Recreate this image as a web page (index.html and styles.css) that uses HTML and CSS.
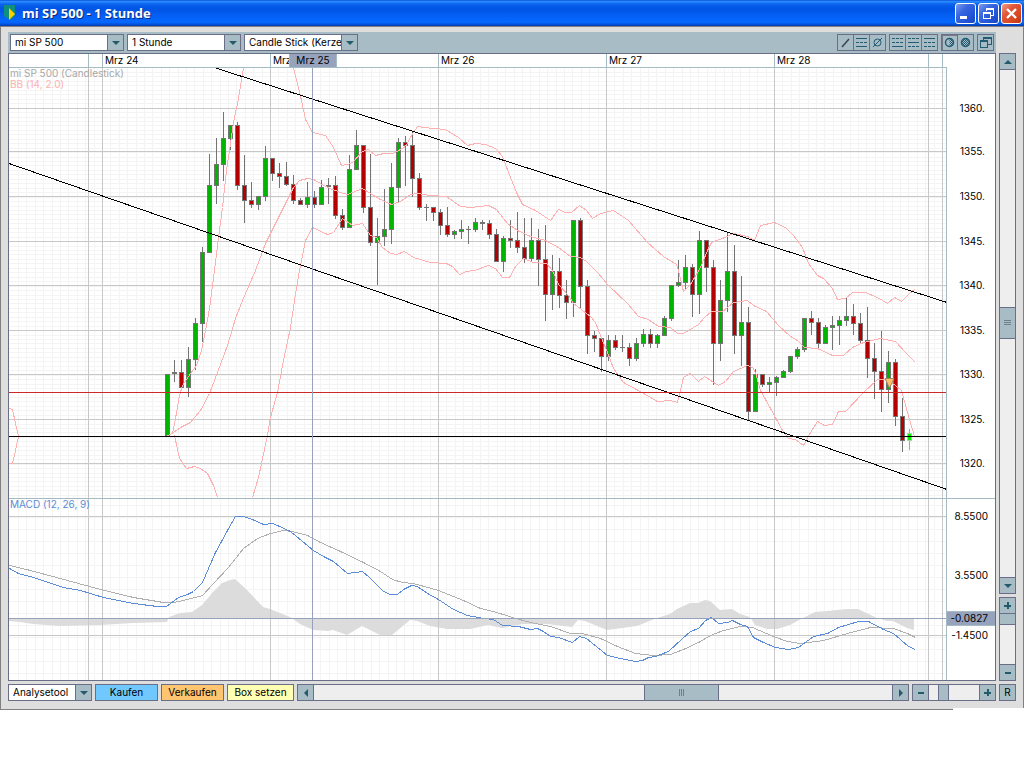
FILE: index.html
```html
<!DOCTYPE html>
<html lang="de">
<head>
    <meta charset="UTF-8">
    <meta name="viewport" content="width=device-width, initial-scale=1.0">
    <title>mi SP 500 - 1 Stunde</title>
    <link rel="stylesheet" href="styles.css">
</head>
<body>
    <div class="window">
        <header class="titlebar">
            <svg class="app-icon" width="12" height="16" viewBox="0 0 12 16">
                <path d="M0 0H11V11L6 15L0 11Z" fill="#0f8f7c"/>
                <path d="M5 3L11 9L5 15Z" fill="#ffd000"/>
            </svg>
            <h1>mi SP 500 - 1 Stunde</h1>
            <div class="window-buttons">
                <button class="win-btn" aria-label="Minimieren">
                    <svg width="19" height="19" viewBox="0 0 19 19"><path d="M4 12H11V15H4Z" fill="#fff"/></svg>
                </button>
                <button class="win-btn" aria-label="Wiederherstellen">
                    <svg width="19" height="19" viewBox="0 0 19 19" fill="none" stroke="#fff" shape-rendering="crispEdges">
                        <path d="M7.5 7V4.5H14.5V11.5H12"/><path d="M7 5H15" stroke-width="2"/>
                        <path d="M4.5 8.5H11.5V14.5H4.5Z"/><path d="M4 9H12" stroke-width="2"/>
                    </svg>
                </button>
                <button class="win-btn win-close" aria-label="Schließen">
                    <svg width="19" height="19" viewBox="0 0 19 19"><path d="M5 5L14 14M14 5L5 14" stroke="#fff" stroke-width="2.4"/></svg>
                </button>
            </div>
        </header>

        <div class="content">
            <div class="workspace">
                <div class="main">
                    <div class="toolbar">
                        <div class="select">
                            <select aria-label="Instrument"><option>mi SP 500</option></select>
                            <span class="select-arrow"><svg width="8" height="4"><path d="M0 0H8L4 4Z"/></svg></span>
                        </div>
                        <div class="select">
                            <select aria-label="Zeitraum"><option>1 Stunde</option></select>
                            <span class="select-arrow"><svg width="8" height="4"><path d="M0 0H8L4 4Z"/></svg></span>
                        </div>
                        <div class="select">
                            <select aria-label="Darstellung"><option>Candle Stick (Kerzen)</option></select>
                            <span class="select-arrow"><svg width="8" height="4"><path d="M0 0H8L4 4Z"/></svg></span>
                        </div>
                        <div class="tools">
                            <div class="tool-group">
                                <button aria-label="Trendlinie"><svg class="tool-icon"><path d="M4 12L11 4" stroke="#35464f" stroke-width="1.5"/></svg></button>
                                <button aria-label="Kanal"><svg class="tool-icon crisp"><path d="M2 3.5H13M2 11.5H13"/><path d="M2 7.5H13" stroke-dasharray="3 1"/></svg></button>
                                <button aria-label="Linien löschen"><svg class="tool-icon"><circle cx="7.5" cy="7.5" r="3.5"/><path d="M3 12L12 3"/></svg></button>
                            </div>
                            <div class="tool-group">
                                <button aria-label="Linie unten"><svg class="tool-icon crisp"><path d="M2 3.5H13M2 7.5H13" stroke-dasharray="3 1"/><path d="M2 11.5H13"/></svg></button>
                                <button aria-label="Linie mitte"><svg class="tool-icon crisp"><path d="M2 3.5H13M2 11.5H13" stroke-dasharray="3 1"/><path d="M2 7.5H13"/></svg></button>
                                <button aria-label="Linie oben"><svg class="tool-icon crisp"><path d="M2 7.5H13M2 11.5H13" stroke-dasharray="3 1"/><path d="M2 3.5H13"/></svg></button>
                            </div>
                            <div class="tool-group">
                                <button class="pressed" aria-label="Raster halb">
                                    <svg class="tool-icon">
                                        <defs><pattern id="checks" width="2" height="2" patternUnits="userSpaceOnUse"><path d="M0 0H1V1H0ZM1 1H2V2H1Z" fill="#235b73" stroke="none"/></pattern></defs>
                                        <circle cx="7.5" cy="7.5" r="4" stroke-width="1.5"/><path d="M7.5 3.5A4 4 0 0 1 7.5 11.5Z" fill="url(#checks)" stroke="none"/>
                                    </svg>
                                </button>
                                <button aria-label="Raster voll"><svg class="tool-icon"><circle cx="7.5" cy="7.5" r="4" fill="url(#checks)" stroke-width="1.5"/></svg></button>
                            </div>
                            <div class="tool-group">
                                <button aria-label="Fenster lösen"><svg class="tool-icon crisp"><path d="M5.5 5V2.5H13.5V9.5H10"/><path d="M2.5 5.5H9.5V12.5H2.5Z"/><path d="M5 3H14M2 6H10" stroke-width="2"/></svg></button>
                            </div>
                        </div>
                    </div>

                    <div class="chart">
                        <div class="plot" id="plot">
                            <svg id="chart" viewBox="9 54 938 626" preserveAspectRatio="none" role="img" aria-label="Kursverlauf mi SP 500"></svg>
                            <div class="legend legend-price">
                                <div>mi SP 500 (Candlestick)</div>
                                <div class="legend-bb">BB (14, 2.0)</div>
                            </div>
                            <div class="legend legend-macd">MACD (12, 26, 9)</div>
                        </div>
                        <div class="axis">
                            <div class="axis-price" id="axisPrice"></div>
                            <div class="axis-macd" id="axisMacd"></div>
                        </div>
                    </div>
                </div>

                <div class="side">
                    <div class="slider vertical scroll">
                        <button aria-label="Nach oben"><svg width="8" height="4"><path d="M0 4H8L4 0Z"/></svg></button>
                        <input type="range" step="any" value="49.8" aria-label="Vertikal scrollen">
                        <button aria-label="Nach unten"><svg width="8" height="4"><path d="M0 0H8L4 4Z"/></svg></button>
                    </div>
                    <div class="slider vertical zoom">
                        <button aria-label="Vertikal vergrößern"><svg width="7" height="7"><path d="M0 3H3V0H5V3H7V5H5V7H3V5H0Z"/></svg></button>
                        <input type="range" value="0" aria-label="Vertikaler Zoom">
                        <button aria-label="Vertikal verkleinern"><svg width="6" height="2"><path d="M0 0H6V2H0Z"/></svg></button>
                    </div>
                </div>
            </div>

            <div class="bottom">
                <div class="select analyse">
                    <select aria-label="Analysetool"><option>Analysetool</option></select>
                    <span class="select-arrow"><svg width="8" height="4"><path d="M0 0H8L4 4Z"/></svg></span>
                </div>
                <button class="btn btn-buy">Kaufen</button>
                <button class="btn btn-sell">Verkaufen</button>
                <button class="btn btn-box">Box setzen</button>
                <div class="slider horizontal scroll">
                    <button aria-label="Nach links"><svg width="4" height="8"><path d="M4 0V8L0 4Z"/></svg></button>
                    <input type="range" step="any" value="65.6" aria-label="Horizontal scrollen">
                    <button aria-label="Nach rechts"><svg width="4" height="8"><path d="M0 0V8L4 4Z"/></svg></button>
                </div>
                <div class="slider horizontal zoom">
                    <button aria-label="Horizontal verkleinern"><svg width="6" height="2"><path d="M0 0H6V2H0Z"/></svg></button>
                    <input type="range" value="23" aria-label="Horizontaler Zoom">
                    <button aria-label="Horizontal vergrößern"><svg width="7" height="7"><path d="M0 3H3V0H5V3H7V5H5V7H3V5H0Z"/></svg></button>
                </div>
                <button class="btn btn-reset">R</button>
            </div>
        </div>
    </div>

    <script src="chart.js"></script>
</body>
</html>
```

FILE: styles.css
```css
* {
    box-sizing: border-box;
}

body {
    margin: 0;
    background: #fff;
    font-family: Inter, "Liberation Sans", Arial, sans-serif;
    font-size: 10px;
    line-height: 13px;
    color: #000;
}

button,
select,
input {
    margin: 0;
    padding: 0;
    border: none;
    border-radius: 0;
    font: inherit;
    color: inherit;
}

.window {
    position: relative;
}

/* cut-off corner of the frame */
.window::after {
    content: "";
    position: absolute;
    right: 0;
    bottom: 0;
    width: 71px;
    height: 2px;
    background: #fff;
}

.titlebar {
    display: flex;
    align-items: center;
    height: 26px;
    padding: 0 2px 0 4px;
    background: linear-gradient(#0a50d8 0%, #2a8cff 6%, #0a62ee 16%, #0054e3 35%, #0560f5 62%, #0468ff 85%, #0050d8 94%, #0038a8 100%);
}

.titlebar h1 {
    flex: 1;
    margin: 0 0 0 6px;
    font-family: "Open Sans", "Noto Sans", sans-serif;
    font-size: 13px;
    line-height: 20px;
    font-weight: 700;
    color: #fff;
    text-shadow: 1px 1px 0 #0a2a80;
}

.window-buttons {
    display: flex;
    gap: 2px;
}

.win-btn {
    display: flex;
    width: 21px;
    height: 21px;
    border: 1px solid #fff;
    border-radius: 3px;
    background: linear-gradient(135deg, #7c9cf0 0%, #3a68e0 35%, #2454d8 70%, #1a48c0 100%);
}

.win-close {
    background: linear-gradient(135deg, #f0a088 0%, #e0583a 35%, #d84820 70%, #b83410 100%);
}

.content {
    display: flex;
    flex-direction: column;
    gap: 3px;
    padding: 5px 7px 8px;
    background: #dedede;
    border: 1px solid #808080;
}

.workspace {
    display: flex;
    gap: 3px;
}

.main {
    flex: 1;
    min-width: 0;
}

.toolbar {
    display: flex;
    gap: 3px;
    padding: 2px;
    background: #a7bcc5;
}

.select {
    position: relative;
    width: 114px;
    height: 17px;
    border: 1px solid #6a6f87;
    background: #fff;
}

.select select {
    display: block;
    appearance: none;
    width: 100%;
    height: 15px;
    padding: 0 16px 0 4px;
    background: #fff;
    line-height: 15px;
}

.select-arrow {
    position: absolute;
    top: 0;
    right: 0;
    display: flex;
    align-items: center;
    justify-content: center;
    width: 16px;
    height: 15px;
    border-left: 1px solid #6a6f87;
    background: #a7bcc5;
    pointer-events: none;
}

.select-arrow svg,
.slider svg {
    fill: #235b6b;
}

.tools {
    display: flex;
    gap: 3px;
    margin-left: auto;
}

.tool-group {
    display: flex;
    border: 1px solid #6a6f87;
}

.tool-group button {
    width: 15px;
    height: 15px;
    background: #a7bcc5;
}

.tool-group button + button {
    width: 16px;
    border-left: 1px solid #6a6f87;
}

.tool-group .pressed {
    box-shadow: inset 1px 1px 0 #77798a;
}

.tool-icon {
    display: block;
    width: 15px;
    height: 15px;
    fill: none;
    stroke: #235b73;
}

.crisp {
    shape-rendering: crispEdges;
}

/* chart */
.chart {
    display: flex;
    height: 628px;
    border: 1px solid #6a6f87;
    background: #fff;
}

.plot {
    position: relative;
    flex: 1;
    min-width: 0;
}

.plot svg {
    display: block;
    width: 100%;
    height: 626px;
}

.plot line,
.plot polyline,
.plot rect {
    shape-rendering: crispEdges;
}

.minor { stroke: #f4f4f4; }
.major { stroke: #c8c8c8; }
.frame { stroke: #a5bbc3; }
.cursor { stroke: #97a3bd; }
.trend { stroke: #000; }
.stop { stroke: #cc2828; }
.histogram { fill: #dcdcdc; }
.wick { stroke: #747474; }
.edge { fill: #747474; }
.up { fill: #00b400; }
.down { fill: #b40000; }
.wick-live { stroke: #a8a8a8; }
.edge-live { fill: #a0d8a0; }
.live { fill: #00f000; }
.marker { fill: #ffc468; stroke: #a08868; }

.bb,
.macd,
.signal {
    fill: none;
}

.bb { stroke: #ffb0b0; }
.macd { stroke: #5c8cd8; }
.signal { stroke: #b0b0b0; }

.legend {
    position: absolute;
    left: 1px;
    line-height: 11px;
    color: #a8a8a8;
}

.legend-price { top: 14px; }
.legend-bb { color: #ffb0b0; }

.legend-macd {
    top: 445px;
    color: #5c8cd8;
}

.date {
    position: absolute;
    top: 0;
    padding-left: 3px;
    white-space: nowrap;
}

.date-active {
    width: 48px;
    height: 14px;
    padding: 0;
    border: 1px solid #a5bbc3;
    border-top: none;
    background: #97a3bd;
    text-align: center;
}

.axis {
    width: 48px;
}

.axis-price,
.axis-macd {
    position: relative;
}

.axis-price {
    height: 445px;
    border-bottom: 1px solid #a5bbc3;
}

.axis-label {
    position: absolute;
    right: 10px;
}

.axis-macd .axis-label {
    right: 7px;
}

.axis-macd .axis-active {
    right: 0;
    width: 48px;
    height: 15px;
    padding-right: 7px;
    border: 1px solid #a5bbc3;
    border-width: 1px 0;
    background: #97a3bd;
    text-align: right;
}

/* scroll bars and zoom sliders */
.side {
    display: flex;
    flex-direction: column;
    gap: 3px;
    width: 17px;
    padding-top: 21px;
}

.slider {
    display: flex;
    border: 1px solid #6a6f87;
    background: #eee;
}

.slider button {
    display: flex;
    flex: none;
    align-items: center;
    justify-content: center;
    background: #a7bcc5;
}

.slider input {
    flex: 1;
    appearance: none;
    min-width: 0;
    min-height: 0;
    background: #eee;
}

.slider input::-webkit-slider-thumb {
    appearance: none;
    border: 0 solid #6a6f87;
    border-radius: 0;
    background: #a7bcc5;
}

.horizontal {
    height: 17px;
}

.horizontal button {
    width: 16px;
    height: 15px;
}

.horizontal button:first-child { border-right: 1px solid #6a6f87; }
.horizontal button:last-child { border-left: 1px solid #6a6f87; }

.horizontal input {
    height: 15px;
}

.horizontal input::-webkit-slider-thumb {
    width: 11px;
    height: 15px;
    border-width: 0 1px;
}

.horizontal.scroll {
    flex: 1;
}

.horizontal.scroll input::-webkit-slider-thumb {
    width: 75px;
    background: repeating-linear-gradient(90deg, #6a8090 0 1px, #a7bcc5 1px 2px) center / 5px 7px no-repeat #a7bcc5;
}

.horizontal.zoom {
    width: 84px;
}

.vertical {
    flex-direction: column;
}

.vertical button {
    width: 15px;
    height: 16px;
}

.vertical button:first-child { border-bottom: 1px solid #6a6f87; }
.vertical button:last-child { border-top: 1px solid #6a6f87; }

.vertical input {
    writing-mode: vertical-lr;
    width: 15px;
}

.vertical input::-webkit-slider-thumb {
    width: 15px;
    height: 11px;
    border-bottom-width: 1px;
}

.vertical.scroll {
    flex: 1;
}

.vertical.scroll input::-webkit-slider-thumb {
    height: 32px;
    border-width: 1px 0;
    background: repeating-linear-gradient(#6a8090 0 1px, #a7bcc5 1px 2px) center / 7px 5px no-repeat #a7bcc5;
}

.vertical.zoom {
    height: 84px;
}

/* bottom bar */
.bottom {
    display: flex;
    gap: 3px;
}

.analyse {
    width: 84px;
}

.btn {
    width: 63px;
    height: 17px;
    border: 1px solid #6a6f87;
    line-height: 15px;
    text-align: center;
}

.btn-buy { background: #70c8ff; }
.btn-sell { background: #ffc470; }

.btn-box {
    width: 67px;
    background: #ffffb4;
}

.btn-reset {
    width: 17px;
    background: #a7bcc5;
}
```

FILE: chart.js
```js
const svg = document.getElementById('chart');
const plot = document.getElementById('plot');

const LEFT = 9, TOP = 54, WIDTH = 938;

// [high, body top, body bottom, low, direction]
const candles = [
    [374, 374, 436, 436, 'u'], [360, 372, 374, 382, 'u'], [360, 372, 388, 390, 'd'], [347, 359, 388, 397, 'u'],
    [318, 323, 360, 370, 'u'], [247, 252, 324, 342, 'u'], [154, 185, 253, 253, 'u'], [138, 164, 186, 204, 'u'],
    [112, 138, 165, 181, 'u'], [125, 125, 139, 150, 'u'], [122, 125, 186, 190, 'd'], [155, 185, 201, 223, 'd'],
    [182, 200, 205, 208, 'd'], [196, 196, 205, 210, 'u'], [146, 158, 197, 201, 'u'], [158, 158, 174, 181, 'd'],
    [163, 173, 177, 188, 'd'], [162, 176, 185, 186, 'd'], [175, 184, 201, 204, 'd'], [198, 200, 205, 205, 'd'],
    [182, 197, 205, 208, 'u'], [191, 197, 205, 208, 'd'], [180, 187, 205, 205, 'u'], [178, 185, 187, 204, 'u'],
    [176, 185, 216, 219, 'd'], [209, 215, 228, 230, 'd'], [155, 169, 228, 228, 'u'], [130, 145, 170, 170, 'u'],
    [145, 145, 208, 213, 'd'], [154, 207, 243, 246, 'd'], [218, 236, 243, 285, 'u'], [189, 229, 237, 246, 'u'],
    [163, 187, 230, 244, 'u'], [138, 142, 188, 202, 'u'], [136, 142, 146, 186, 'd'], [132, 145, 179, 197, 'd'],
    [173, 178, 208, 210, 'd'], [204, 207, 208, 221, 'd'], [207, 207, 213, 221, 'd'], [209, 212, 226, 235, 'd'],
    [207, 225, 235, 237, 'd'], [230, 231, 235, 239, 'u'], [220, 229, 232, 239, 'u'], [226, 229, 230, 244, 'u'],
    [218, 222, 230, 232, 'u'], [220, 222, 224, 230, 'u'], [220, 223, 235, 239, 'd'], [229, 234, 262, 262, 'd'],
    [236, 238, 262, 272, 'u'], [220, 238, 241, 248, 'd'], [212, 240, 248, 253, 'd'], [218, 247, 259, 263, 'd'],
    [218, 240, 259, 262, 'u'], [229, 240, 260, 286, 'd'], [225, 259, 295, 321, 'd'], [255, 271, 295, 310, 'u'],
    [258, 271, 296, 308, 'd'], [280, 295, 303, 319, 'd'], [220, 220, 303, 317, 'u'], [218, 220, 287, 308, 'd'],
    [280, 286, 336, 354, 'd'], [331, 335, 339, 352, 'd'], [338, 338, 357, 372, 'd'], [335, 340, 357, 361, 'u'],
    [335, 340, 348, 350, 'd'], [335, 347, 348, 352, 'u'], [343, 347, 359, 366, 'd'], [338, 343, 359, 361, 'u'],
    [329, 334, 344, 347, 'u'], [329, 334, 344, 348, 'd'], [334, 335, 344, 348, 'u'], [316, 318, 336, 336, 'u'],
    [285, 285, 319, 321, 'u'], [260, 282, 286, 287, 'u'], [255, 267, 283, 290, 'u'], [264, 267, 295, 317, 'd'],
    [231, 240, 295, 314, 'u'], [240, 240, 268, 292, 'd'], [260, 267, 344, 385, 'd'], [280, 300, 344, 361, 'u'],
    [232, 271, 301, 312, 'u'], [245, 271, 336, 354, 'd'], [276, 322, 336, 366, 'u'], [307, 322, 412, 421, 'd'],
    [369, 374, 412, 412, 'u'], [374, 374, 385, 387, 'd'], [377, 382, 385, 392, 'u'], [376, 377, 383, 396, 'u'],
    [370, 371, 378, 378, 'u'], [356, 356, 372, 373, 'u'], [347, 349, 357, 359, 'u'], [318, 318, 350, 352, 'u'],
    [311, 318, 323, 335, 'd'], [318, 322, 344, 348, 'd'], [325, 327, 344, 344, 'u'], [316, 325, 328, 350, 'u'],
    [316, 320, 326, 345, 'u'], [298, 316, 321, 326, 'u'], [304, 316, 324, 335, 'd'], [313, 323, 341, 343, 'd'],
    [307, 340, 359, 378, 'd'], [343, 358, 372, 399, 'd'], [331, 371, 390, 412, 'd'], [351, 362, 390, 403, 'u'],
    [359, 362, 417, 426, 'd'], [398, 416, 441, 452, 'd'], [429, 433, 441, 450, 'live']
];

const bands = [
    '9,408 12,409 15,423 18,436 15,450 12,463 9,463',
    // upper
    '167,435 172,433 175,418 179,395 182,385 190,373 196,365 201,350 205,330 209,308 214,270 218,237 222,207 226,170 230,143 233,122 238,98 243,68',
    '293,68 297,83 301,100 305,119 312,132 325,135 333,147 341,165 347,164 352,162 362,151 368,149 375,155 383,153 393,153 405,146 411,135 417,126 423,127 445,129 458,137 467,145 475,143 485,144 495,148 502,156 508,172 516,192 522,204 535,210 550,220 558,209 565,212 571,212 579,205 586,210 592,218 600,213 613,210 628,220 647,242 663,256 676,264 678,270 683,291 690,284 700,267 707,250 711,242 722,238 733,233 747,236 754,240 760,225 774,222 785,227 793,235 802,247 808,263 817,275 823,278 832,288 837,299 845,298 852,292 865,292 877,297 887,303 894,297 901,301 908,294 915,288',
    // middle
    '173,432 180,427 190,422 200,410 209,393 217,372 227,345 235,318 242,300 255,270 265,243 278,217 293,187 299,180 307,178 313,179 327,187 340,192 347,194 362,188 378,198 391,204 400,201 410,194 417,193 430,195 446,196 460,206 470,207 488,205 496,209 507,223 517,230 530,236 545,240 558,247 570,256 580,257 586,261 597,272 608,285 627,303 638,316 648,319 658,326 670,327 677,333 683,333 698,324 704,317 711,311 722,311 733,302 747,300 753,305 766,311 778,325 790,336 797,340 804,347 817,348 832,355 843,355 852,347 863,342 880,338 895,341 905,352 915,362',
    // lower
    '174,435 179,458 186,468 194,466 200,468 207,473 213,485 217,497',
    '252,497 258,477 267,435 270,417 277,392 283,360 290,327 294,300 299,270 305,240 312,227 327,234 333,232 342,218 352,225 362,223 370,235 376,237 382,247 390,253 396,254 404,251 413,257 430,262 446,263 452,266 459,274 466,271 474,270 488,265 495,268 502,277 509,277 515,266 523,258 533,262 546,263 552,270 558,284 568,295 573,303 590,316 595,322 600,335 607,352 613,368 623,382 636,389 650,397 657,401 670,400 677,402 683,377 690,373 698,381 704,376 718,385 725,381 733,371 747,365 752,367 755,372 760,390 770,408 782,430 788,438 795,439 803,445 810,432 817,421 824,425 832,424 838,411 845,411 863,392 877,379 886,379 895,385 901,390 907,412 914,436'
];

const signal = '9,565 30,570 67,580 100,589 133,597 163,602 173,602 183,600 202,595 213,583 228,567 243,548 257,538 270,533 283,530 292,531 307,535 320,542 340,551 363,562 380,571 392,579 402,582 413,583 438,590 463,600 480,608 493,611 512,617 530,622 550,626 570,633 582,633 600,638 617,646 635,653 653,655 670,654 683,649 700,641 710,635 723,630 740,626 752,627 773,636 787,641 800,643 823,640 847,633 870,627 893,628 907,633 915,637';

const macd = '9,568 18,573 33,577 63,587 80,590 103,597 133,603 157,606 166,606 178,597 187,594 193,591 202,582 208,568 215,552 227,530 235,516 243,516 252,519 263,524 272,523 277,525 290,531 313,550 323,556 333,561 347,573 362,571 369,577 377,585 383,591 390,594 397,594 403,589 411,585 417,586 427,593 438,599 453,609 467,615 483,618 493,619 502,625 518,626 530,629 537,628 543,631 550,636 558,637 572,642 579,636 586,638 607,655 620,658 635,661 642,660 648,657 655,656 668,651 682,638 690,631 698,628 705,620 711,617 718,623 727,622 732,620 740,624 747,626 753,637 763,642 775,647 788,649 798,647 813,636 827,633 838,627 858,621 868,621 883,629 893,633 908,646 915,649';

const histogram = '9,618 9,621 20,622 33,624 60,626 100,625 133,623 167,622 169,617 180,613 192,612 202,605 213,592 222,583 230,580 235,579 247,590 263,607 270,609 290,617 300,624 313,630 328,631 333,630 347,635 362,626 380,635 392,635 410,620 417,621 430,626 447,629 470,629 488,625 502,628 523,624 547,624 572,627 578,620 585,621 607,630 637,626 657,618 670,614 677,609 690,603 698,603 705,600 710,601 720,610 732,609 740,614 750,617 755,625 767,629 777,629 790,625 803,618 815,612 827,611 847,609 858,609 877,618 887,621 893,621 907,628 914,630 914,618';

function draw(name, attrs, className) {
    const el = document.createElementNS('http://www.w3.org/2000/svg', name);
    for (const key in attrs) {
        el.setAttribute(key, attrs[key]);
    }
    el.setAttribute('class', className);
    svg.appendChild(el);
}

function line(x1, y1, x2, y2, className) {
    draw('line', { x1, y1, x2, y2 }, className);
}

function vLine(x, y1, y2, className) {
    line(x + 0.5, y1, x + 0.5, y2, className);
}

function hLine(y, className) {
    line(LEFT, y + 0.5, LEFT + WIDTH, y + 0.5, className);
}

function curve(points, className) {
    // move the points to pixel centres
    const shifted = points.split(' ').map(p => p.split(',').map(n => Number(n) + 0.5).join(',')).join(' ');
    draw('polyline', { points: shifted }, className);
}

// fine grid
for (let x = 18; x < 946; x += 8.4) {
    vLine(Math.round(x), 68, 680, 'minor');
}
for (let i = -8; i < 88; i++) {
    const y = Math.round(107.6 + i * 4.45);
    if (y > 68 && y < 498) hLine(y, 'minor');
}
for (let y = 505; y < 680; y += 12) {
    hLine(y, 'minor');
}

// histogram lies under the main grid
draw('polygon', { points: histogram }, 'histogram');

[88, 102, 270, 438, 606, 774, 928, 942].forEach(x => {
    vLine(x, 54, 67, 'frame');
    vLine(x, 68, 680, 'major');
});
[108, 151, 196, 241, 285, 330, 374, 419, 463, 516, 635].forEach(y => hLine(y, 'major'));

candles.forEach(([high, top, bottom, low, dir], i) => {
    const x = 167 + i * 7;
    const live = dir === 'live';
    vLine(x, high, low, live ? 'wick-live' : 'wick');
    draw('rect', { x: x - 2, y: top, width: 5, height: bottom - top }, live ? 'edge-live' : 'edge');
    if (bottom - top > 2) {
        const className = { u: 'up', d: 'down', live: 'live' }[dir];
        draw('rect', { x: x - 1, y: top + 1, width: 3, height: bottom - top - 2 }, className);
    }
});

bands.forEach(points => curve(points, 'bb'));
line(214, 67.5, 947, 302.5, 'trend');
line(9, 163.5, 947, 489.5, 'trend');
hLine(392, 'stop');
hLine(436, 'trend');
draw('path', { d: 'M885 378.5H894L889.5 388Z' }, 'marker');

curve(signal, 'signal');
curve(macd, 'macd');

hLine(67, 'frame');
hLine(498, 'frame');
hLine(618, 'cursor');
vLine(312, 67, 680, 'cursor');
vLine(946, 67, 680, 'frame');

function addLabel(parent, text, className, prop, value) {
    const el = document.createElement('div');
    el.className = className;
    el.textContent = text;
    el.style[prop] = value;
    parent.appendChild(el);
}

const left = x => (x - LEFT) / WIDTH * 100 + '%';

addLabel(plot, 'Mrz 24', 'date', 'left', left(102));
addLabel(plot, 'Mrz', 'date', 'left', left(270));
addLabel(plot, 'Mrz 25', 'date date-active', 'left', left(289));
addLabel(plot, 'Mrz 26', 'date', 'left', left(438));
addLabel(plot, 'Mrz 27', 'date', 'left', left(606));
addLabel(plot, 'Mrz 28', 'date', 'left', left(774));

const axisPrice = document.getElementById('axisPrice');
[108, 151, 196, 241, 285, 330, 374, 419, 463].forEach((y, i) => {
    addLabel(axisPrice, (1360 - i * 5) + '.', 'axis-label', 'top', (y - TOP - 6) + 'px');
});

const axisMacd = document.getElementById('axisMacd');
addLabel(axisMacd, '8.5500', 'axis-label', 'top', '11px');
addLabel(axisMacd, '3.5500', 'axis-label', 'top', '70px');
addLabel(axisMacd, '-1.4500', 'axis-label', 'top', '130px');
addLabel(axisMacd, '-0.0827', 'axis-label axis-active', 'top', '112px');
```
